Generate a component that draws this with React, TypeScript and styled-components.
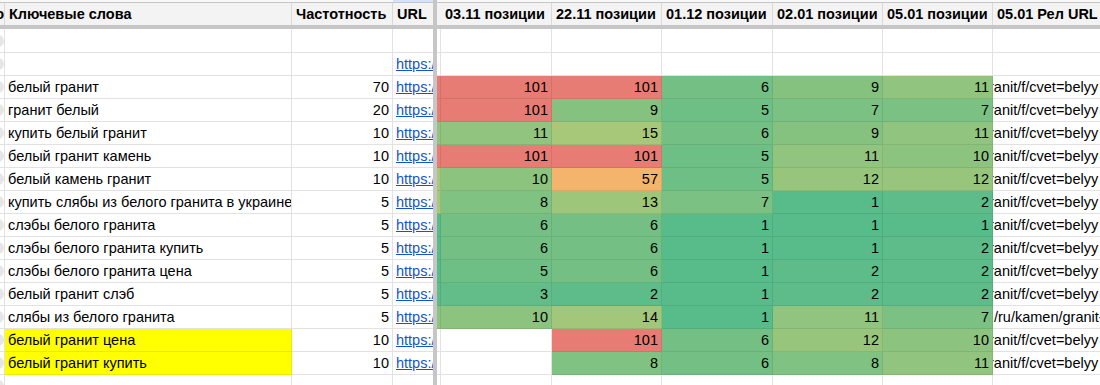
import React from 'react'
import styled, { createGlobalStyle } from 'styled-components'

const GRID = '#e2e2e2'
const FREEZE = '#c6c6c6'
const TINT = 'rgba(0, 0, 0, 0.08)'

const GlobalStyle = createGlobalStyle`
	html, body {
		margin: 0;
		padding: 0;
		background: #fff;
		overflow: hidden;
	}
	body {
		font-family: 'Liberation Sans', Arial, sans-serif;
		font-size: 14.5px;
		color: #000;
	}
`

const Sheet = styled.div`
	display: grid;
	grid-template-columns: 5px 287px 101px 40px 4px 4px 111px 110px 111px 110px 110px 107px;
	grid-template-rows: 3px 22px 4px 24px repeat(15, 23px);
	width: 1100px;
`

const FreezeColumn = styled.div`
	grid-column: 5;
	grid-row: 1 / -1;
	background: ${FREEZE};
`

const FreezeRow = styled.div`
	grid-column: 1 / -1;
	grid-row: 3;
	background: ${FREEZE};
`

const TopCell = styled.div<{ $active?: boolean }>`
	box-sizing: border-box;
	background: ${({ $active }) => ($active ? '#d3e3fd' : '#f8f8f8')};
	border-bottom: 1px solid ${FREEZE};
`

const HeadCell = styled.div<{ $open?: boolean; $right?: boolean }>`
	box-sizing: border-box;
	display: flex;
	align-items: center;
	justify-content: ${({ $right }) => ($right ? 'flex-end' : 'flex-start')};
	padding: ${({ $right }) => ($right ? '0' : '0 4px')};
	overflow: hidden;
	white-space: nowrap;
	background: #f3f3f3;
	font-weight: bold;
	border-right: ${({ $open }) => ($open ? 'none' : '1px solid #d9d9d9')};
`

const Cell = styled.div<{ $bg?: string; $right?: boolean; $open?: boolean; $tight?: boolean }>`
	box-sizing: border-box;
	min-width: 0;
	display: flex;
	align-items: center;
	justify-content: ${({ $right }) => ($right ? 'flex-end' : 'flex-start')};
	padding: ${({ $tight }) => ($tight ? '0' : '0 3px')};
	overflow: hidden;
	white-space: nowrap;
	background: ${({ $bg }) => $bg ?? '#fff'};
	border-bottom: 1px solid ${({ $bg }) => ($bg ? TINT : GRID)};
	border-right: ${({ $open, $bg }) => ($open ? 'none' : `1px solid ${$bg ? TINT : GRID}`)};
`

const Text = styled.span`
	flex-shrink: 0;
`

const Dot = styled.span`
	flex-shrink: 0;
	width: 12px;
	height: 12px;
	border-radius: 50%;
	background: #e6e6e6;
`

const Link = styled.a`
	flex-shrink: 0;
	margin-left: 3px;
	color: #1155cc;
	text-decoration: underline;
`

const UrlTail = styled.span<{ $cut?: boolean }>`
	flex-shrink: 0;
	margin-left: ${({ $cut }) => ($cut ? '-4px' : '1px')};
`

const GREEN = [87, 187, 138]
const YELLOW = [255, 214, 102]
const RED = [230, 124, 115]

const mix = (a: number[], b: number[], t: number) => a.map((v, i) => Math.round(v + (b[i] - v) * t))

const scaleColor = (v: number | null) => {
	if (v === null) return undefined
	const mid = 30
	const c = v <= mid ? mix(GREEN, YELLOW, (v - 1) / (mid - 1)) : mix(YELLOW, RED, (v - mid) / (101 - mid))
	return `rgb(${c.join(', ')})`
}

type Row = {
	keyword: string
	freq: number
	prev: number | null
	positions: (number | null)[]
	url?: string
	marked?: boolean
}

const rows: Row[] = [
	{ keyword: 'белый гранит', freq: 70, prev: 101, positions: [101, 101, 6, 9, 11] },
	{ keyword: 'гранит белый', freq: 20, prev: 101, positions: [101, 9, 5, 7, 7] },
	{ keyword: 'купить белый гранит', freq: 10, prev: 11, positions: [11, 15, 6, 9, 11] },
	{ keyword: 'белый гранит камень', freq: 10, prev: 101, positions: [101, 101, 5, 11, 10] },
	{ keyword: 'белый камень гранит', freq: 10, prev: 15, positions: [10, 57, 5, 12, 12] },
	{ keyword: 'купить слябы из белого гранита в украине', freq: 5, prev: 15, positions: [8, 13, 7, 1, 2] },
	{ keyword: 'слэбы белого гранита', freq: 5, prev: 1, positions: [6, 6, 1, 1, 1] },
	{ keyword: 'слэбы белого гранита купить', freq: 5, prev: 1, positions: [6, 6, 1, 1, 2] },
	{ keyword: 'слэбы белого гранита цена', freq: 5, prev: 1, positions: [5, 6, 1, 2, 2] },
	{ keyword: 'белый гранит слэб', freq: 5, prev: 2, positions: [3, 2, 1, 2, 2] },
	{ keyword: 'слябы из белого гранита', freq: 5, prev: 10, positions: [10, 14, 1, 11, 7], url: '/ru/kamen/granit-belyy' },
	{ keyword: 'белый гранит цена', freq: 10, prev: null, positions: [null, 101, 6, 12, 10], marked: true },
	{ keyword: 'белый гранит купить', freq: 10, prev: null, positions: [null, 8, 6, 8, 11], marked: true },
]

const headers = ['Ключевые слова', 'Частотность', 'URL', '', '03.11 позиции', '22.11 позиции', '01.12 позиции', '02.01 позиции', '05.01 позиции', '05.01 Рел URL']

const BlankRow = ({ link }: { link?: boolean }) => (
	<>
		<Cell $tight $right>
			<Dot />
		</Cell>
		<Cell />
		<Cell />
		<Cell $open $tight>
			{link && <Link href='#'>https://granit.ua/</Link>}
		</Cell>
		<Cell $tight />
		{[0, 1, 2, 3, 4].map(i => (
			<Cell key={i} />
		))}
		<Cell $open />
	</>
)

const DataRow = ({ row }: { row: Row }) => (
	<>
		<Cell $tight $right>
			<Dot />
		</Cell>
		<Cell $bg={row.marked ? '#ffff00' : undefined}>
			<Text>{row.keyword}</Text>
		</Cell>
		<Cell $right>
			<Text>{row.freq}</Text>
		</Cell>
		<Cell $open $tight>
			<Link href='#'>https://granit.ua/</Link>
		</Cell>
		<Cell $tight $bg={scaleColor(row.prev)} />
		{row.positions.map((v, i) => (
			<Cell key={i} $right $bg={scaleColor(v)}>
				<Text>{v ?? ''}</Text>
			</Cell>
		))}
		<Cell $open $tight>
			{row.url ? <UrlTail>{row.url}</UrlTail> : <UrlTail $cut>ranit/f/cvet=belyy</UrlTail>}
		</Cell>
	</>
)

const App = () => (
	<>
		<GlobalStyle />
		<Sheet>
			<FreezeColumn />
			<FreezeRow />
			{Array.from({ length: 11 }, (_, i) => (
				<TopCell key={i} $active={i === 3} />
			))}
			<HeadCell $right>
				<Text>о</Text>
			</HeadCell>
			{headers.map((h, i) => (
				<HeadCell key={i} $open={i === 2 || i === 9}>
					<Text>{h}</Text>
				</HeadCell>
			))}
			<BlankRow />
			<BlankRow link />
			{rows.map(row => (
				<DataRow key={row.keyword} row={row} />
			))}
			<BlankRow />
		</Sheet>
	</>
)

export default App
